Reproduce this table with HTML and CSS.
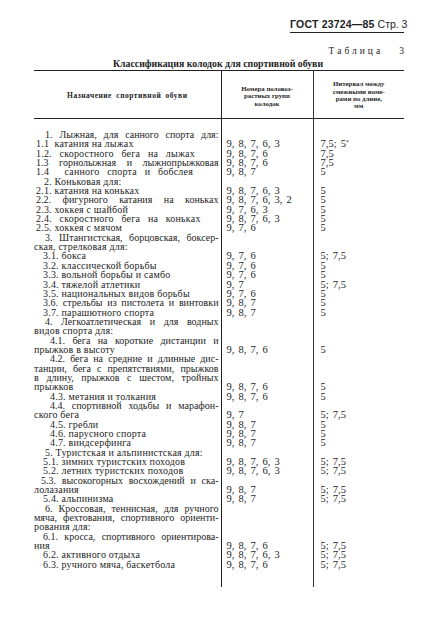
FILE: index.html
```html
<!DOCTYPE html>
<html lang="ru">
<head>
<meta charset="utf-8">
<title>ГОСТ 23724—85 Стр. 3</title>
<link rel="stylesheet" href="styles.css">
</head>
<body>
<div class="page">
  <div class="runhead"><span class="gost">ГОСТ 23724—85</span> <span class="str">Стр. 3</span></div>
  <div class="tabno">Таблица&nbsp;&nbsp;&nbsp;3</div>
  <div class="title">Классификация колодок для спортивной обуви</div>
  <table class="tbl">
    <colgroup><col class="c1"><col class="c2"><col class="c3"></colgroup>
    <thead>
      <tr>
        <th class="h1">Назначение спортивной обуви</th>
        <th class="h2">Номера половоз-<br>растных групп<br>колодок</th>
        <th class="h3">Интервал между<br>смежными номе-<br>рами по длине,<br>мм</th>
      </tr>
    </thead>
    <tbody>
      <tr class="sp-top"><td></td><td></td><td></td></tr>
      <tr><td><div class="l j ih">1. Лыжная, для санного спорта для:</div></td><td></td><td></td></tr>
      <tr><td><div class="l in">1.1&nbsp; катания на лыжах</div></td><td>9, 8, 7, 6, 3</td><td>7,5; 5<sup>*</sup></td></tr>
      <tr><td><div class="l in ws">1.2. скоростного бега на лыжах</div></td><td>9, 8, 7, 6</td><td>7,5</td></tr>
      <tr><td><div class="l j in">1.3 горнолыжная и лыжнопрыжковая</div></td><td>9, 8, 7, 6</td><td>7,5</td></tr>
      <tr><td><div class="l in ws">1.4&nbsp; санного спорта и бобслея</div></td><td>9, 8, 7</td><td>5</td></tr>
      <tr><td><div class="l ih2">2. Коньковая для:</div></td><td></td><td></td></tr>
      <tr><td><div class="l in">2.1. катания на коньках</div></td><td>9, 8, 7, 6, 3</td><td>5</td></tr>
      <tr><td><div class="l j in">2.2. фигурного катания на коньках</div></td><td>9, 8, 7, 6, 3, 2</td><td>5</td></tr>
      <tr><td><div class="l in">2.3. хоккея с шайбой</div></td><td>9, 7, 6, 3</td><td>5</td></tr>
      <tr><td><div class="l in ws">2.4. скоростного бега на коньках</div></td><td>9, 8, 7, 6, 3</td><td>5</td></tr>
      <tr><td><div class="l in">2.5. хоккея с мячом</div></td><td>9, 7, 6</td><td>5</td></tr>
      <tr><td><div class="l j ih">3. Штангистская, борцовская, боксер-</div><div class="l">ская, стрелковая для:</div></td><td></td><td></td></tr>
      <tr><td><div class="l is">3.1. бокса</div></td><td>9, 7, 6</td><td>5; 7,5</td></tr>
      <tr><td><div class="l is">3.2. классической борьбы</div></td><td>9, 7, 6</td><td>5</td></tr>
      <tr><td><div class="l is">3.3. вольной борьбы и самбо</div></td><td>9, 7, 6</td><td>5</td></tr>
      <tr><td><div class="l is">3.4. тяжелой атлетики</div></td><td>9, 7</td><td>5; 7,5</td></tr>
      <tr><td><div class="l is">3.5. национальных видов борьбы</div></td><td>9, 7, 6</td><td>5</td></tr>
      <tr><td><div class="l j is">3.6. стрельбы из пистолета и винтовки</div></td><td>9, 8, 7</td><td>5</td></tr>
      <tr><td><div class="l is">3.7. парашютного спорта</div></td><td>9, 8, 7</td><td>5</td></tr>
      <tr><td><div class="l j ih">4. Легкоатлетическая и для водных</div><div class="l">видов спорта для:</div></td><td></td><td></td></tr>
      <tr><td><div class="l j i4">4.1. бега на короткие дистанции и</div><div class="l">прыжков в высоту</div></td><td>9, 8, 7, 6</td><td>5</td></tr>
      <tr><td><div class="l j i4">4.2. бега на средние и длинные дис-</div><div class="l j">танции, бега с препятствиями, прыжков</div><div class="l j">в длину, прыжков с шестом, тройных</div><div class="l">прыжков</div></td><td>9, 8, 7, 6</td><td>5</td></tr>
      <tr><td><div class="l i4">4.3. метания и толкания</div></td><td>9, 8, 7, 6</td><td>5</td></tr>
      <tr><td><div class="l j i4">4.4. спортивной ходьбы и марафон-</div><div class="l">ского бега</div></td><td>9, 7</td><td>5; 7,5</td></tr>
      <tr><td><div class="l i4">4.5. гребли</div></td><td>9, 8, 7</td><td>5</td></tr>
      <tr><td><div class="l i4">4.6. парусного спорта</div></td><td>9, 8, 7</td><td>5</td></tr>
      <tr><td><div class="l i4">4.7. виндсерфинга</div></td><td>9, 8, 7</td><td>5</td></tr>
      <tr><td><div class="l ih">5. Туристская и альпинистская для:</div></td><td></td><td></td></tr>
      <tr><td><div class="l is">5.1. зимних туристских походов</div></td><td>9, 8, 7, 6, 3</td><td>5; 7,5</td></tr>
      <tr><td><div class="l is">5.2. летних туристских походов</div></td><td>9, 8, 7, 6, 3</td><td>5; 7,5</td></tr>
      <tr><td><div class="l j is2">5.3. высокогорных восхождений и ска-</div><div class="l">лолазания</div></td><td>9, 8, 7</td><td>5; 7,5</td></tr>
      <tr><td><div class="l is">5.4. альпинизма</div></td><td>9, 8, 7</td><td>5; 7,5</td></tr>
      <tr><td><div class="l j ih">6. Кроссовая, теннисная, для ручного</div><div class="l j">мяча, фехтования, спортивного ориенти-</div><div class="l">рования для:</div></td><td></td><td></td></tr>
      <tr><td><div class="l j is">6.1. кросса, спортивного ориентирова-</div><div class="l">ния</div></td><td>9, 8, 7, 6</td><td>5; 7,5</td></tr>
      <tr><td><div class="l is">6.2. активного отдыха</div></td><td>9, 8, 7, 6, 3</td><td>5; 7,5</td></tr>
      <tr><td><div class="l is">6.3. ручного мяча, баскетбола</div></td><td>9, 8, 7, 6</td><td>5; 7,5</td></tr>
      <tr class="sp-bot"><td></td><td></td><td></td></tr>
    </tbody>
  </table>
</div>
</body>
</html>
```
FILE: styles.css
```css
html, body {
  margin: 0;
  padding: 0;
  background: #ffffff;
}
body {
  font-family: "Liberation Serif", "DejaVu Serif", serif;
  color: #1e1e1e;
}
.page {
  width: 370px;
  margin-left: 34px;
  padding-top: 18px;
}
.runhead {
  width: 114px;
  margin-left: auto;
  font-family: "Liberation Sans", Arial, sans-serif;
  font-size: 10.5px;
  line-height: 13px;
  padding-bottom: 1px;
  border-bottom: 1.5px solid #222;
  text-align: right;
  white-space: nowrap;
}
.gost {
  font-weight: bold;
  letter-spacing: 0.2px;
}
.str {
  font-weight: normal;
}
.tabno {
  margin-top: 13px;
  text-align: right;
  font-size: 9.5px;
  line-height: 11px;
  letter-spacing: 3px;
  margin-right: -3px;
}
.title {
  margin-top: 1px;
  text-align: center;
  font-weight: bold;
  font-size: 9.8px;
  line-height: 12px;
  padding-right: 2px;
}
.tbl {
  width: 370px;
  border-collapse: collapse;
  table-layout: fixed;
  border-top: 1.5px solid #222;
}
.c1 { width: 187px; }
.c2 { width: 92px; }
.c3 { width: 91px; }
.tbl th {
  height: 44px;
  padding: 0;
  vertical-align: middle;
  text-align: center;
  font-weight: bold;
  font-size: 6.8px;
  line-height: 7.3px;
  border-bottom: 1px solid #222;
}
.tbl th.h1 {
  font-size: 7.5px;
  letter-spacing: 0.5px;
  word-spacing: 2px;
  border-right: 1px solid #222;
  padding-top: 2px;
}
.tbl th.h2 {
  border-right: 1.5px solid #333;
  padding-top: 3px;
}
.tbl th.h3 {
  padding-top: 1px;
}
.tbl td {
  padding: 0;
  vertical-align: bottom;
  font-size: 10px;
  line-height: 9.35px;
  white-space: nowrap;
}
.tbl td:nth-child(1) {
  border-right: 1px solid #222;
  padding-right: 2px;
}
.tbl td:nth-child(2) {
  border-right: 1.5px solid #333;
  padding-left: 5px;
  font-size: 10.5px;
  word-spacing: 1.5px;
}
.tbl td:nth-child(3) {
  padding-left: 7px;
  font-size: 10.5px;
  word-spacing: 1.5px;
}
.tbl sup {
  font-size: 6px;
  line-height: 0;
  vertical-align: 3px;
}
.sp-top td { height: 11px; }
.sp-bot td { height: 18px; }
.l {
  display: block;
  white-space: nowrap;
  letter-spacing: 0.2px;
}
.j {
  text-align: justify;
  text-align-last: justify;
  white-space: normal;
  word-spacing: -2px;
  letter-spacing: 0;
}
.ws { word-spacing: 5px; }
.in { padding-left: 2px; }
.ih { padding-left: 11px; }
.ih2 { padding-left: 10px; }
.is { padding-left: 9px; }
.is2 { padding-left: 7px; }
.i4 { padding-left: 16px; }
```
